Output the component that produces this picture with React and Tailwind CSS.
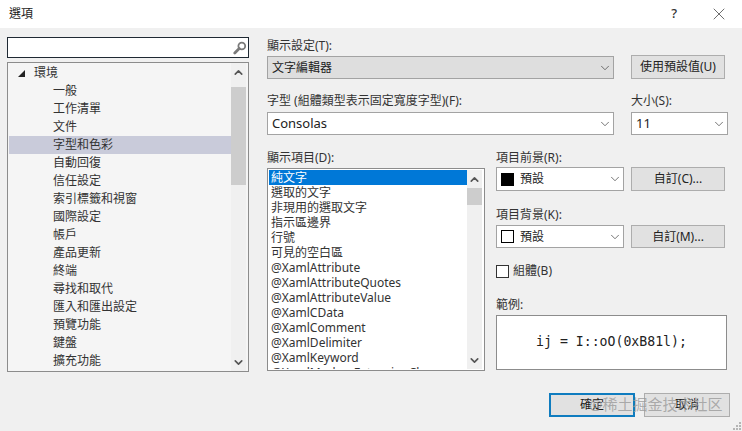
import { ChevronDown, ChevronUp, X } from 'lucide-react';

const uiFont = 'font-["Noto_Sans","Noto_Sans_CJK_TC",sans-serif]';

const treeItems = ['一般', '工作清單', '文件', '字型和色彩', '自動回復', '信任設定', '索引標籤和視窗', '國際設定', '帳戶', '產品更新', '終端', '尋找和取代', '匯入和匯出設定', '預覽功能', '鍵盤', '擴充功能'];

const listItems = ['選取的文字', '非現用的選取文字', '指示區邊界', '行號', '可見的空白區', '@XamlAttribute', '@XamlAttributeQuotes', '@XamlAttributeValue', '@XamlCData', '@XamlComment', '@XamlDelimiter', '@XamlKeyword', '@XamlMarkupExtensionClass'];

function Combo({ className, children }) {
  return (
    <div className={`flex items-center justify-between border border-[#a3a3a3] pl-[4px] pr-[1px] text-[12px] text-[#222] ${className}`}>
      {children}
      <ChevronDown size={14} strokeWidth={1.25} className="text-[#444]" />
    </div>
  );
}

function Btn({ className, children, focused }) {
  return (
    <div className={`flex items-center justify-center bg-[#e1e1e1] text-[12px] text-[#222] ${focused ? 'border-2 border-[#0f7cbf]' : 'border border-[#adadad]'} ${className}`}>
      {children}
    </div>
  );
}

function Scrollbar({ thumb, className }) {
  return (
    <div className={`flex flex-col items-center justify-between bg-[#f0f0f0] ${className}`}>
      <div className="flex w-full flex-col items-center">
        <div className="flex h-[18px] items-center">
          <ChevronUp size={13} strokeWidth={3} className="text-[#555]" />
        </div>
        <div className={`w-full bg-[#cdcdcd] ${thumb}`} />
      </div>
      <div className="flex h-[18px] items-center">
        <ChevronDown size={13} strokeWidth={3} className="text-[#555]" />
      </div>
    </div>
  );
}

export default function App() {
  return (
    <div className={`relative flex h-[431px] w-[742px] flex-col overflow-hidden bg-[#f0f0f0] ${uiFont}`}>
      <div className="flex h-[28px] items-center justify-between bg-white pl-[9px] pr-[13px]">
        <span className="text-[12px] text-[#222]">選項</span>
        <div className="flex items-center gap-[32px]">
          <span className="text-[13px] font-medium text-[#333]">?</span>
          <X size={20} strokeWidth={0.8} className="text-[#222]" />
        </div>
      </div>

      <div className="flex pl-[7px] pt-[9px]">
        <div className="flex w-[242px] flex-col gap-[4px]">
          <div className="flex h-[21px] items-center justify-end border border-[#1f2933] bg-white pr-[1px]">
            <svg width="14" height="14" viewBox="0 0 14 14" fill="none">
              <circle cx="8.8" cy="5" r="3.4" stroke="#7a7a7a" strokeWidth="1.8" />
              <path d="M6.2 7.6 L1.8 12" stroke="#7a7a7a" strokeWidth="2.8" strokeLinecap="round" />
            </svg>
          </div>
          <div className="flex h-[310px] border border-[#8c8c8c] bg-[#f5f5f5] pl-[1px]">
            <div className="h-full flex-1 overflow-hidden pt-[1px] text-[12px] leading-[18px] text-[#333]">
              <div className="flex h-[18px] items-center pl-[9px]">
                <span className="mr-[9px] h-0 w-0 border-b-[7px] border-l-[7px] border-b-[#222] border-l-transparent" />
                環境
              </div>
              {treeItems.map((item) => (
                <div key={item} className={`h-[18px] pl-[44px] ${item === '字型和色彩' ? 'bg-[#c9cbda]' : ''}`}>
                  {item}
                </div>
              ))}
            </div>
            <Scrollbar thumb="mt-[6px] h-[98px]" className="mr-[2px] w-[15px]" />
          </div>
        </div>

        <div className="ml-[18px] flex w-[461px] flex-col">
          <div className="h-[18px] text-[12px] leading-[18px] text-[#333]">顯示設定(T):</div>
          <div className="flex items-start">
            <Combo className="mt-[1px] h-[23px] w-[347px] bg-[#dedede]">文字編輯器</Combo>
            <Btn className="ml-[17px] h-[24px] w-[94px]">使用預設值(U)</Btn>
          </div>

          <div className="mt-[13px] flex h-[20px] text-[12px] leading-[18px] text-[#333]">
            <span className="w-[364px]">字型 (組體類型表示固定寬度字型)(F):</span>
            <span>大小(S):</span>
          </div>
          <div className="flex">
            <Combo className="h-[23px] w-[347px] bg-white"><span className="text-[13px]">Consolas</span></Combo>
            <Combo className="ml-[17px] h-[23px] w-[97px] bg-white"><span className="text-[13px]">11</span></Combo>
          </div>

          <div className="mt-[14px] flex">
            <div className="flex w-[229px] flex-col pr-[11px]">
              <div className="h-[19px] text-[12px] leading-[18px] text-[#333]">顯示項目(D):</div>
              <div className="flex h-[203px] border border-[#8c8c8c] bg-white p-[1px]">
                <div className="flex-1 overflow-hidden text-[12px] leading-[15px] text-[#333]">
                  <div className="bg-[#0078d7] pl-[2px] text-white">純文字</div>
                  {listItems.map((item) => (
                    <div key={item} className="whitespace-nowrap pl-[2px]">{item}</div>
                  ))}
                </div>
                <Scrollbar thumb="h-[17px]" className="mr-[1px] w-[15px]" />
              </div>
            </div>

            <div className="flex flex-1 flex-col">
              <div className="h-[18px] text-[12px] leading-[18px] text-[#333]">項目前景(R):</div>
              <div className="flex gap-[7px]">
                <Combo className="h-[24px] w-[128px] bg-white">
                  <span className="flex items-center gap-[6px]">
                    <span className="h-[13px] w-[13px] bg-black" />
                    預設
                  </span>
                </Combo>
                <Btn className="h-[24px] w-[94px]">自訂(C)...</Btn>
              </div>
              <div className="mt-[15px] h-[19px] text-[12px] leading-[18px] text-[#333]">項目背景(K):</div>
              <div className="flex gap-[7px]">
                <Combo className="h-[23px] w-[128px] bg-white">
                  <span className="flex items-center gap-[6px]">
                    <span className="h-[13px] w-[13px] border border-black bg-white" />
                    預設
                  </span>
                </Combo>
                <Btn className="h-[23px] w-[94px]">自訂(M)...</Btn>
              </div>
              <div className="mt-[16px] flex h-[14px] items-center gap-[4px] text-[12px] text-[#333]">
                <span className="h-[13px] w-[13px] border border-[#333] bg-white" />
                組體(B)
              </div>
              <div className="mt-[18px] h-[19px] text-[12px] leading-[18px] text-[#333]">範例:</div>
              <div className="flex h-[55px] w-[231px] items-center justify-center border border-[#8c8c8c] bg-white pb-[1px] font-['DejaVu_Sans_Mono',monospace] text-[13.2px] text-[#222]">
                ij = I::oO(0xB81l);
              </div>
            </div>
          </div>
        </div>
      </div>

      <div className="mt-[21px] flex justify-end gap-[9px] pr-[12px]">
        <Btn focused className="h-[24px] w-[86px]">確定</Btn>
        <Btn className="h-[24px] w-[86px]">取消</Btn>
      </div>

      <span className="absolute left-[589px] top-[393px] text-[15px] leading-[22px] text-[#9a9a9a]/80">@稀土掘金技术社区</span>

      <svg className="absolute bottom-[1px] right-[1px]" width="8" height="8" viewBox="0 0 8 8" fill="#b5b5b5">
        <rect x="6" y="0" width="2" height="2" />
        <rect x="3" y="3" width="2" height="2" />
        <rect x="6" y="3" width="2" height="2" />
        <rect x="0" y="6" width="2" height="2" />
        <rect x="3" y="6" width="2" height="2" />
        <rect x="6" y="6" width="2" height="2" />
      </svg>
    </div>
  );
}
